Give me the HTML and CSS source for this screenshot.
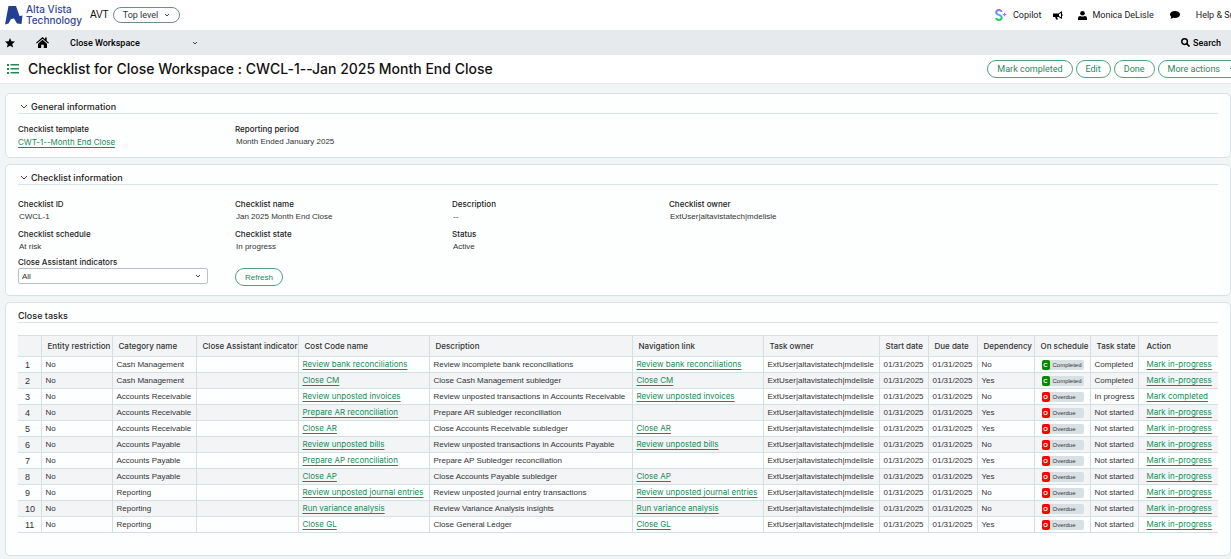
FILE: index.html
```html
<!DOCTYPE html>
<html lang="en">
  <head>
    <meta charset="utf-8">
    <title>Checklist for Close Workspace</title>
    <link rel="stylesheet" href="styles.css">
  </head>
  <body>
    <header class="topbar">
      <a class="logo" href="#">
        <svg width="18" height="19" viewBox="0 0 18 19"><path fill="#22408f" d="M3.500 0h7.500l3.500 10 3-.5L16.500 18l-4.500-.5L9 12.500 6 13l-2.500 4.500L0 18.500z"/></svg>
        <span class="logo-text">Alta Vista<br>Technology</span>
      </a>
      <span class="company">AVT</span>
      <button class="level">Top level
        <svg class="chevron" width="6" height="4" viewBox="0 0 6 4"><path d="M1 1l2 2 2-2"/></svg>
      </button>
      <div class="user-menu">
        <a href="#" class="copilot">
          <svg width="12" height="12" viewBox="0 0 12 12">
            <defs><linearGradient id="s-grad" x1="0" y1="0" x2="0" y2="1"><stop offset="0" stop-color="#a06af5"/><stop offset=".5" stop-color="#3fb5dc"/><stop offset="1" stop-color="#12d84b"/></linearGradient></defs>
            <path d="M6.500 3C6.500.300 1.200.300 1.200 3.500c0 3 5.500 1.800 5.500 5 0 3.200-5.500 3-5.500.500" fill="none" stroke="url(#s-grad)" stroke-width="2"/>
            <path d="M9.500 3.300l.700 1.500 1.500.700-1.500.700-.700 1.500-.700-1.500-1.500-.700 1.500-.700z" fill="#a06af5"/>
          </svg>
          Copilot</a>
        <a href="#" class="news" aria-label="News"><svg width="10" height="9" viewBox="0 0 10 9"><path d="M9 0v8L5.500 6H4l1 2.500H3L2.200 6H0V2.500h5.500L9 0zM8 2L6 3.200v1.900L8 6.300zM9.500 3.300v1.600H9V3.300z" fill-rule="evenodd"/></svg></a>
        <a href="#" class="user"><svg width="9" height="9" viewBox="0 0 9 9"><circle cx="4.500" cy="2.300" r="2.300"/><path d="M0 9V7.200Q0 5 2.300 5q2.200 1 4.400 0Q9 5 9 7.200V9z"/></svg> Monica DeLisle</a>
        <a href="#" class="chat" aria-label="Chat"><svg width="10" height="8" viewBox="0 0 10 8"><path d="M5 0c2.800 0 5 1.500 5 3.500S7.800 7 5 7q-1 0-1.900-.3Q1.900 7.800.3 7.800 1.200 7 1.200 5.800 0 4.900 0 3.500C0 1.500 2.200 0 5 0z"/></svg></a>
        <a href="#">Help &amp; Support</a>
      </div>
    </header>

    <nav class="navbar">
      <a href="#" aria-label="Favorites"><svg width="10" height="10" viewBox="0 0 10 10"><path d="M5 0l1.400 3.300 3.600.300-2.700 2.400.8 3.500L5 7.700 1.900 9.500l.8-3.500L0 3.600l3.600-.3z"/></svg></a>
      <a href="#" class="home" aria-label="Home"><svg width="13" height="11" viewBox="0 0 13 11"><path d="M6.500 0L9 2.200V.6h1.700v3.100L13 5.700l-.8.9L6.500 1.700.8 6.600 0 5.700z"/><path d="M6.500 2.800l4.500 3.900V11H7.800V7.700H5.200V11H2V6.700z"/></svg></a>
      <button class="workspace">Close Workspace
        <svg class="chevron" width="6" height="4" viewBox="0 0 6 4"><path d="M1 1l2 2 2-2"/></svg>
      </button>
      <a href="#" class="search"><svg width="9" height="9" viewBox="0 0 9 9"><circle cx="3.600" cy="3.600" r="2.800" fill="none" stroke="#000" stroke-width="1.500"/><path d="M5.500 5.500l3 3" stroke="#000" stroke-width="1.700"/></svg> Search</a>
    </nav>

    <div class="titlebar">
      <svg width="12" height="10" viewBox="0 0 12 10"><path fill="#1d8a58" d="M0 0h2v2H0zM3.500 0H12v1.500H3.500zM0 4h2v2H0zM3.500 4H12v1.500H3.500zM0 8h2v2H0zM3.500 8H12v1.500H3.500z"/></svg>
      <h1>Checklist for Close Workspace : CWCL-1--Jan 2025 Month End Close</h1>
      <div class="actions">
        <button class="btn">Mark completed</button>
        <button class="btn">Edit</button>
        <button class="btn">Done</button>
        <button class="btn more">More actions
          <svg class="chevron" width="6" height="4" viewBox="0 0 6 4"><path d="M1 1l2 2 2-2"/></svg>
        </button>
      </div>
    </div>

    <main>
      <section class="panel general">
        <h2><svg class="chevron" width="8" height="5" viewBox="0 0 8 5"><path d="M1 1l3 3 3-3"/></svg>General information</h2>
        <dl class="fields">
          <div><dt>Checklist template</dt><dd class="flush"><a href="#">CWT-1--Month End Close</a></dd></div>
          <div><dt>Reporting period</dt><dd>Month Ended January 2025</dd></div>
        </dl>
      </section>

      <section class="panel checklist">
        <h2><svg class="chevron" width="8" height="5" viewBox="0 0 8 5"><path d="M1 1l3 3 3-3"/></svg>Checklist information</h2>
        <dl class="fields">
          <div><dt>Checklist ID</dt><dd>CWCL-1</dd></div>
          <div><dt>Checklist name</dt><dd>Jan 2025 Month End Close</dd></div>
          <div><dt>Description</dt><dd>--</dd></div>
          <div><dt>Checklist owner</dt><dd>ExtUser|altavistatech|mdelisle</dd></div>
          <div><dt>Checklist schedule</dt><dd>At risk</dd></div>
          <div><dt>Checklist state</dt><dd>In progress</dd></div>
          <div><dt>Status</dt><dd>Active</dd></div>
        </dl>
        <form class="filter">
          <div class="filter-field">
            <label for="indicators">Close Assistant indicators</label>
            <div class="select">
              <select id="indicators"><option>All</option></select>
              <svg class="chevron" width="6" height="4" viewBox="0 0 6 4"><path d="M1 1l2 2 2-2"/></svg>
            </div>
          </div>
          <button type="button" class="btn refresh">Refresh</button>
        </form>
      </section>

      <section class="panel tasks">
        <h2>Close tasks</h2>
        <table>
          <colgroup>
            <col class="c-num"><col class="c-entity"><col class="c-category"><col class="c-indicator"><col class="c-link"><col class="c-desc"><col class="c-link"><col class="c-owner"><col class="c-date"><col class="c-date"><col class="c-dep"><col class="c-sched"><col class="c-state"><col>
          </colgroup>
          <thead>
            <tr><th></th><th>Entity restriction</th><th>Category name</th><th>Close Assistant indicator</th><th>Cost Code name</th><th>Description</th><th>Navigation link</th><th>Task owner</th><th>Start date</th><th>Due date</th><th>Dependency</th><th>On schedule</th><th>Task state</th><th>Action</th></tr>
          </thead>
          <tbody>
            <tr><td>1</td><td>No</td><td>Cash Management</td><td></td><td><a href="#">Review bank reconciliations</a></td><td>Review incomplete bank reconciliations</td><td><a href="#">Review bank reconciliations</a></td><td>ExtUser|altavistatech|mdelisle</td><td>01/31/2025</td><td>01/31/2025</td><td>No</td><td><span class="badge done"><b>C</b>Completed</span></td><td>Completed</td><td><a href="#">Mark in-progress</a></td></tr>
            <tr><td>2</td><td>No</td><td>Cash Management</td><td></td><td><a href="#">Close CM</a></td><td>Close Cash Management subledger</td><td><a href="#">Close CM</a></td><td>ExtUser|altavistatech|mdelisle</td><td>01/31/2025</td><td>01/31/2025</td><td>Yes</td><td><span class="badge done"><b>C</b>Completed</span></td><td>Completed</td><td><a href="#">Mark in-progress</a></td></tr>
            <tr><td>3</td><td>No</td><td>Accounts Receivable</td><td></td><td><a href="#">Review unposted invoices</a></td><td>Review unposted transactions in Accounts Receivable</td><td><a href="#">Review unposted invoices</a></td><td>ExtUser|altavistatech|mdelisle</td><td>01/31/2025</td><td>01/31/2025</td><td>No</td><td><span class="badge"><b>O</b>Overdue</span></td><td>In progress</td><td><a href="#">Mark completed</a></td></tr>
            <tr><td>4</td><td>No</td><td>Accounts Receivable</td><td></td><td><a href="#">Prepare AR reconciliation</a></td><td>Prepare AR subledger reconciliation</td><td></td><td>ExtUser|altavistatech|mdelisle</td><td>01/31/2025</td><td>01/31/2025</td><td>Yes</td><td><span class="badge"><b>O</b>Overdue</span></td><td>Not started</td><td><a href="#">Mark in-progress</a></td></tr>
            <tr><td>5</td><td>No</td><td>Accounts Receivable</td><td></td><td><a href="#">Close AR</a></td><td>Close Accounts Receivable subledger</td><td><a href="#">Close AR</a></td><td>ExtUser|altavistatech|mdelisle</td><td>01/31/2025</td><td>01/31/2025</td><td>Yes</td><td><span class="badge"><b>O</b>Overdue</span></td><td>Not started</td><td><a href="#">Mark in-progress</a></td></tr>
            <tr><td>6</td><td>No</td><td>Accounts Payable</td><td></td><td><a href="#">Review unposted bills</a></td><td>Review unposted transactions in Accounts Payable</td><td><a href="#">Review unposted bills</a></td><td>ExtUser|altavistatech|mdelisle</td><td>01/31/2025</td><td>01/31/2025</td><td>No</td><td><span class="badge"><b>O</b>Overdue</span></td><td>Not started</td><td><a href="#">Mark in-progress</a></td></tr>
            <tr><td>7</td><td>No</td><td>Accounts Payable</td><td></td><td><a href="#">Prepare AP reconciliation</a></td><td>Prepare AP Subledger reconciliation</td><td></td><td>ExtUser|altavistatech|mdelisle</td><td>01/31/2025</td><td>01/31/2025</td><td>Yes</td><td><span class="badge"><b>O</b>Overdue</span></td><td>Not started</td><td><a href="#">Mark in-progress</a></td></tr>
            <tr><td>8</td><td>No</td><td>Accounts Payable</td><td></td><td><a href="#">Close AP</a></td><td>Close Accounts Payable subledger</td><td><a href="#">Close AP</a></td><td>ExtUser|altavistatech|mdelisle</td><td>01/31/2025</td><td>01/31/2025</td><td>Yes</td><td><span class="badge"><b>O</b>Overdue</span></td><td>Not started</td><td><a href="#">Mark in-progress</a></td></tr>
            <tr><td>9</td><td>No</td><td>Reporting</td><td></td><td><a href="#">Review unposted journal entries</a></td><td>Review unposted journal entry transactions</td><td><a href="#">Review unposted journal entries</a></td><td>ExtUser|altavistatech|mdelisle</td><td>01/31/2025</td><td>01/31/2025</td><td>No</td><td><span class="badge"><b>O</b>Overdue</span></td><td>Not started</td><td><a href="#">Mark in-progress</a></td></tr>
            <tr><td>10</td><td>No</td><td>Reporting</td><td></td><td><a href="#">Run variance analysis</a></td><td>Review Variance Analysis insights</td><td><a href="#">Run variance analysis</a></td><td>ExtUser|altavistatech|mdelisle</td><td>01/31/2025</td><td>01/31/2025</td><td>No</td><td><span class="badge"><b>O</b>Overdue</span></td><td>Not started</td><td><a href="#">Mark in-progress</a></td></tr>
            <tr><td>11</td><td>No</td><td>Reporting</td><td></td><td><a href="#">Close GL</a></td><td>Close General Ledger</td><td><a href="#">Close GL</a></td><td>ExtUser|altavistatech|mdelisle</td><td>01/31/2025</td><td>01/31/2025</td><td>Yes</td><td><span class="badge"><b>O</b>Overdue</span></td><td>Not started</td><td><a href="#">Mark in-progress</a></td></tr>
          </tbody>
        </table>
      </section>
    </main>
  </body>
</html>
```

FILE: styles.css
```css
* { box-sizing: border-box; }

body { margin: 0; background: #f2f5f6; color: #333; font-family: "Liberation Sans", Arial, sans-serif; font-size: 8px; line-height: 12px; overflow-x: hidden; }
h1, h2, dl, dd { margin: 0; }
button, select { font-family: inherit; color: inherit; }
svg { flex: none; }

.chevron { fill: none; stroke: #444; stroke-width: 1; }

/* top bar */
.topbar { display: flex; align-items: center; height: 30px; padding-left: 5px; background: #fff; font-size: 9px; overflow: hidden; white-space: nowrap; }
.topbar a { color: #222; text-decoration: none; }
.topbar .logo { display: flex; align-items: center; gap: 3px; color: #34489a; }
.logo-text { font-family: Inter, sans-serif; font-size: 10px; line-height: 11px; font-weight: 500; }
.company { margin-left: 8px; font-size: 10px; color: #111; }
.level { display: flex; align-items: center; gap: 6px; height: 16px; margin-left: 4px; padding: 0 9px; border: 1px solid #6d8a99; border-radius: 8px; background: #fff; font-size: 9px; }
.user-menu { display: flex; align-items: center; margin-left: auto; margin-right: -25px; }
.user-menu, .level { font-family: Roboto, sans-serif; }
.user-menu a { display: flex; align-items: center; }
.copilot { gap: 6px; }
.news { margin-left: 12px; }
.user { gap: 5px; margin-left: 15px; }
.chat { margin: 0 16px; }

/* workspace navigation */
.navbar { display: flex; align-items: center; height: 25px; padding: 0 10px 0 5px; background: #e6eaed; color: #000; font-family: Roboto, sans-serif; font-size: 9px; font-weight: 500; }
.navbar a { display: flex; color: #000; text-decoration: none; }
.navbar .home { margin-left: 21px; }
.workspace { display: flex; align-items: center; justify-content: space-between; width: 128px; margin-left: 21px; padding: 0; border: 0; background: none; font-size: 9px; font-weight: 500; }
.navbar .search { align-items: center; gap: 3px; margin-left: auto; }

/* page title */
.titlebar { display: flex; align-items: center; height: 29px; padding-left: 7px; background: #fff; border-bottom: 1px solid #e2e8eb; overflow: hidden; white-space: nowrap; }
.titlebar h1 { margin-left: 9px; font-family: Inter, sans-serif; font-size: 14px; line-height: 18px; font-weight: 500; font-feature-settings: "calt" 0; color: #111; }
.actions { display: flex; gap: 3px; margin-left: auto; margin-right: -14px; }
.btn { height: 18px; padding: 0 9px; border: 1px solid #4da57e; border-radius: 9px; background: #fff; color: #1d8a58; font-family: Roboto, sans-serif; font-size: 9px; }
.more { display: flex; align-items: center; gap: 9px; }
.more .chevron { stroke: #1d8a58; }

/* panels */
main { display: flex; flex-direction: column; gap: 6px; padding: 9px 0 4px 5px; }
.panel { padding: 6px 12px 0; border: 1px solid #d9e1e6; border-radius: 5px; background: #fdfefe; }
.panel h2 { display: flex; align-items: center; gap: 3px; height: 14px; border-bottom: 1px solid #dce3e7; font-family: Inter, sans-serif; font-size: 9px; font-weight: 500; color: #222; }
.panel h2 .chevron { margin-left: 2px; }
.general { height: 65px; }
.general .fields { padding-top: 9px; }
.checklist { height: 132px; }
.checklist .fields { padding-top: 13px; }

.fields { display: grid; grid-template-columns: repeat(4, 217px); row-gap: 4px; }
.fields dt, label { font-family: Inter, sans-serif; font-weight: 500; color: #222; }
.fields dd { padding-left: 1px; line-height: 14px; }
.fields .flush { padding-left: 0; }
.panel a { font-family: Inter, sans-serif; font-feature-settings: "calt" 0; color: #1d8a58; text-underline-offset: 2px; }

.filter { display: grid; grid-template-columns: 217px auto; justify-content: start; align-items: end; padding-top: 2px; }
.filter-field { padding-bottom: 2px; }
.filter label { display: block; }
.select { display: grid; align-items: center; width: 190px; }
.select > * { grid-area: 1 / 1; }
.select .chevron { justify-self: end; margin-right: 7px; pointer-events: none; }
.select select { width: 100%; height: 16px; padding: 0 3px; border: 1px solid #b7c2c8; border-radius: 2px; background: #fff; font-size: 8px; appearance: none; }
.refresh { font-family: inherit; font-size: 8px; }

/* tasks table */
.panel.tasks { padding-bottom: 22px; }
table { width: 100%; margin-top: 12px; border-collapse: collapse; table-layout: fixed; white-space: nowrap; }
th, td { padding: 0 4px 0 3px; border: 1px solid #d5dee3; text-align: left; line-height: 12px; overflow: hidden; }
td { padding: 0 2px 0 4px; }
th:first-child, td:first-child { border-left: 0; }
th:last-child, td:last-child { border-right: 0; padding-left: 8px; }
th { height: 21px; padding: 0 0 0 6px; background: #f2f4f6; font-family: Inter, sans-serif; font-weight: 500; }
td { height: 16px; }
td:first-child { padding-left: 7px; font-size: 9px; }
tbody tr:nth-child(even) { background: #f2f4f6; }
.c-num { width: 23px; }
.c-entity { width: 71px; }
.c-category { width: 84px; }
.c-indicator { width: 102px; }
.c-link { width: 131px; }
.c-desc { width: 203px; }
.c-owner { width: 116px; }
.c-date { width: 49px; }
.c-dep { width: 57px; }
.c-sched { width: 56px; }
.c-state { width: 48px; }

.badge { display: flex; align-items: center; gap: 3px; width: 42px; height: 10px; margin-left: 3px; border-radius: 2px; background: #d9e0e4; font-size: 6px; }
.badge b { width: 8px; height: 10px; border-radius: 2px; background: #f00; color: #fff; line-height: 10px; text-align: center; }
.badge.done b { background: #008a00; }
```
